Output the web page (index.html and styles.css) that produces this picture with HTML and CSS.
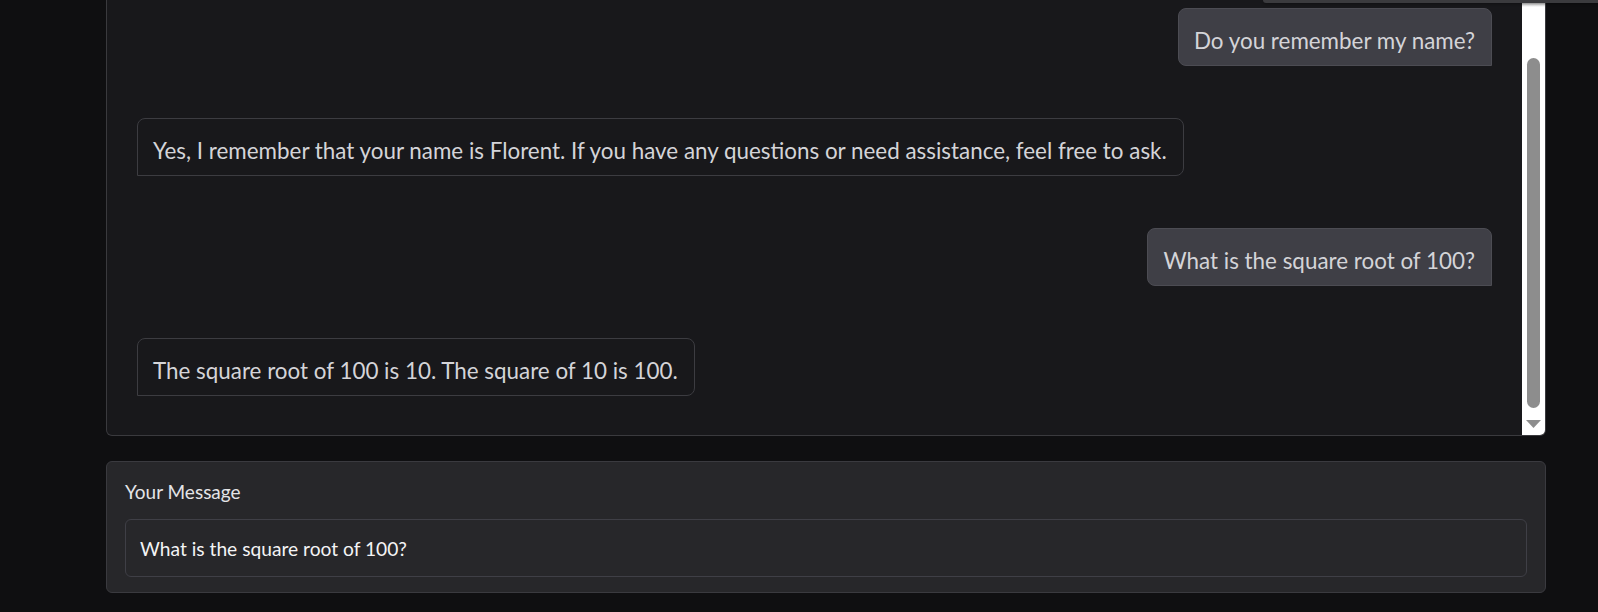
FILE: index.html
```html
<!DOCTYPE html>
<html lang="en">
<head>
<meta charset="utf-8">
<title>Chatbot</title>
<link rel="stylesheet" href="styles.css">
</head>
<body>
<div class="page">
  <div class="chat">
    <div class="messages">
      <div class="bubble user">Do you remember my name?</div>
      <div class="bubble bot">Yes, I remember that your name is Florent. If you have any questions or need assistance, feel free to ask.</div>
      <div class="bubble user">What is the square root of 100?</div>
      <div class="bubble bot">The square root of 100 is 10. The square of 10 is 100.</div>
    </div>
    <div class="scrollbar">
      <div class="thumb"></div>
      <svg class="arrow" width="15" height="8" viewBox="0 0 15 8"><path d="M0 0H15L7.5 8Z" fill="#8d8d8d"/></svg>
    </div>
  </div>
  <div class="composer">
    <div class="label">Your Message</div>
    <div class="textbox">What is the square root of 100?</div>
  </div>
</div>
<div class="overlay-edge"></div>
</body>
</html>
```

FILE: styles.css
```css
html, body {
  margin: 0;
  padding: 0;
  background: #0f0f11;
  font-family: "Source Sans Pro", Lato, "Noto Sans", sans-serif;
  height: 612px;
  overflow: hidden;
}

.page {
  margin-left: 106px;
  width: 1440px;
  display: flex;
  flex-direction: column;
}

.chat {
  height: 436px;
  box-sizing: border-box;
  display: flex;
  background: #18181b;
  border: 1px solid #3a3a3e;
  border-top: none;
  border-radius: 0 0 6px 6px;
  overflow: hidden;
}

.messages {
  flex: 1;
  display: flex;
  flex-direction: column;
  align-items: flex-start;
  gap: 52px;
  padding: 8px 30px 0 30px;
}

.bubble {
  box-sizing: border-box;
  height: 58px;
  padding: 18px 16px 11px 15px;
  font-size: 22.4px;
  line-height: 27px;
  color: #d4d4d8;
  white-space: nowrap;
  border: 1px solid #3c3c41;
}

.user {
  align-self: flex-end;
  background: #3f3f46;
  border-color: #4c4c53;
  border-radius: 8px 8px 0 8px;
}

.bot {
  background: #18181b;
  border-radius: 8px 8px 8px 0;
}

.scrollbar {
  width: 23px;
  flex: none;
  background: linear-gradient(#9a9a9a 0, #ffffff 7px);
  display: flex;
  flex-direction: column;
  align-items: center;
}

.thumb {
  margin-top: 58px;
  width: 13px;
  height: 350px;
  background: #8d8d8d;
  border-radius: 7px;
}

.arrow {
  margin-top: 12px;
  display: block;
}

.composer {
  margin-top: 25px;
  box-sizing: border-box;
  height: 132px;
  background: #27272a;
  border: 1px solid #3a3a3f;
  border-radius: 6px;
  padding: 18px 18px 15px;
  display: flex;
  flex-direction: column;
}

.label {
  font-size: 19px;
  line-height: 24px;
  color: #e4e4e7;
}

.textbox {
  margin-top: 15px;
  box-sizing: border-box;
  height: 59px;
  border: 1px solid #3f3f46;
  border-radius: 6px;
  background: #27272a;
  padding: 16px 14px 0;
  font-size: 19.2px;
  line-height: 25px;
  color: #f4f4f5;
}

.overlay-edge {
  position: absolute;
  top: 0;
  left: 1263px;
  right: 0;
  height: 3px;
  background: #3b3b3e;
  border-bottom-left-radius: 4px;
  box-shadow: 0 1px 3px rgba(0, 0, 0, 0.35);
}
```
